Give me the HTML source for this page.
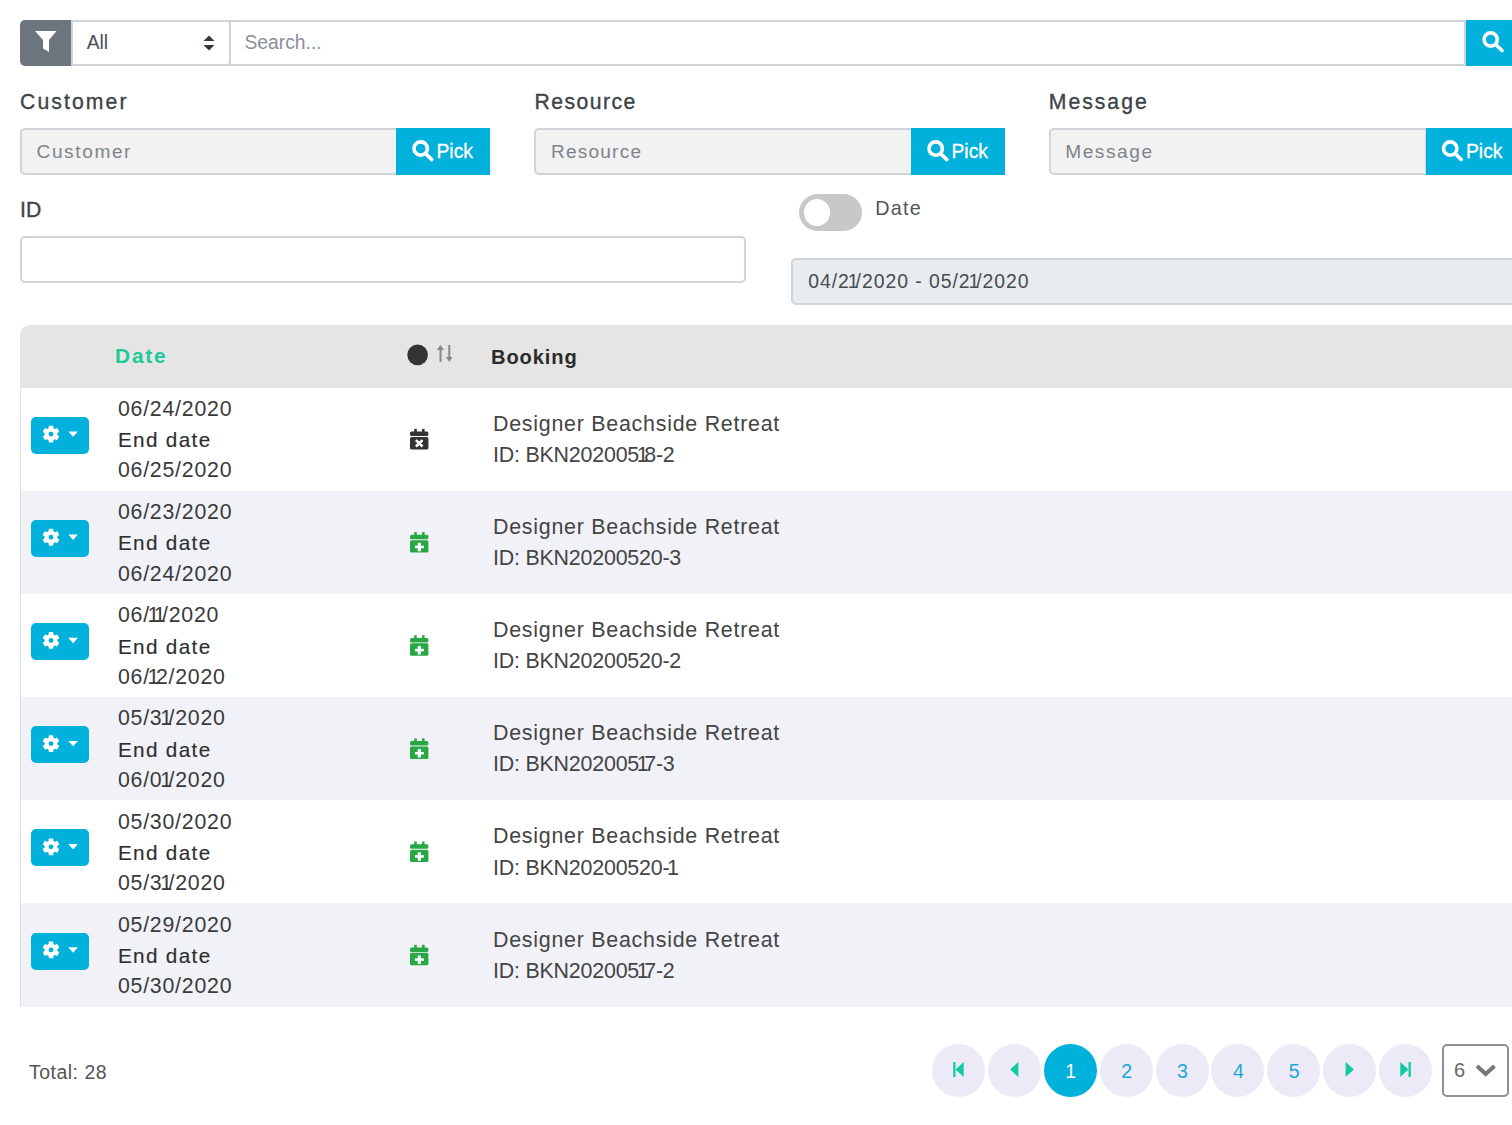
<!DOCTYPE html>
<html><head><meta charset="utf-8"><style>
html,body{margin:0;padding:0;background:#fff;}
body{width:1512px;height:1125px;overflow:hidden;position:relative;font-family:"Liberation Sans",sans-serif;}
.a{position:absolute;box-sizing:border-box;}
.t{position:absolute;line-height:1;white-space:nowrap;}
</style></head><body>
<div class="a" style="left:20.00px;top:20.00px;width:51.00px;height:46.00px;background:#6c757d;border-radius:5px 0 0 5px;"></div>
<svg class="a" style="left:0;top:0" width="100" height="80" viewBox="0 0 100 80"><path d="M35 31 L56.6 31 L49 40 L49 52 L43 48.5 L43 40 Z" fill="#fff"/></svg>
<div class="a" style="left:71.00px;top:20.00px;width:160.00px;height:46.00px;border:2px solid #ced4da;border-radius:0 4px 4px 0;background:#fff;"></div>
<div class="t" style="left:86.70px;top:33.00px;font-size:19.30px;color:#495057;font-weight:normal;letter-spacing:0.000px;">All</div>
<svg class="a" style="left:0;top:0" width="260" height="80" viewBox="0 0 260 80"><path d="M203.5 41 L209 35.5 L214.5 41 Z M203.5 45 L209 50.5 L214.5 45 Z" fill="#343a40"/></svg>
<div class="a" style="left:229.00px;top:20.00px;width:1237.00px;height:46.00px;border:2px solid #ced4da;background:#fff;"></div>
<div class="t" style="left:244.50px;top:33.00px;font-size:19.30px;color:#8a9097;font-weight:normal;letter-spacing:0.000px;">Search...</div>
<div class="a" style="left:1466.00px;top:20.00px;width:60.00px;height:46.00px;background:#00b1dc;"></div>
<svg class="a" style="left:0;top:0" width="1512" height="1125" viewBox="0 0 1512 1125"><circle cx="1490.7" cy="39.5" r="6.6000000000000005" fill="none" stroke="#fff" stroke-width="3.6"/><line x1="1495.9080000000001" y1="44.708" x2="1502" y2="50.5" stroke="#fff" stroke-width="3.6" stroke-linecap="round"/></svg>
<div class="t" style="left:20.00px;top:90.87px;font-size:21.20px;color:#3d4348;font-weight:normal;letter-spacing:2.100px;-webkit-text-stroke:0.35px #3d4348;">Customer</div>
<div class="a" style="left:20.00px;top:128.00px;width:378.50px;height:46.50px;border:2px solid #ced4da;border-radius:5px 0 0 5px;background:#f2f2f2;"></div>
<div class="t" style="left:36.50px;top:141.87px;font-size:19.10px;color:#7d848b;font-weight:normal;letter-spacing:1.600px;">Customer</div>
<div class="a" style="left:396.00px;top:128.00px;width:94.00px;height:46.50px;background:#00b1dc;"></div>
<svg class="a" style="left:0;top:0" width="1512" height="1125" viewBox="0 0 1512 1125"><circle cx="420.7" cy="148.6" r="6.7" fill="none" stroke="#fff" stroke-width="3.6"/><line x1="425.96999999999997" y1="153.87" x2="431.8" y2="159.6" stroke="#fff" stroke-width="3.6" stroke-linecap="round"/></svg>
<div class="t" style="left:436.50px;top:141.80px;font-size:19.30px;color:#fff;font-weight:normal;letter-spacing:0.000px;-webkit-text-stroke:0.3px #fff;">Pick</div>
<div class="t" style="left:534.40px;top:90.87px;font-size:21.20px;color:#3d4348;font-weight:normal;letter-spacing:1.460px;-webkit-text-stroke:0.35px #3d4348;">Resource</div>
<div class="a" style="left:534.40px;top:128.00px;width:378.50px;height:46.50px;border:2px solid #ced4da;border-radius:5px 0 0 5px;background:#f2f2f2;"></div>
<div class="t" style="left:550.90px;top:141.87px;font-size:19.10px;color:#7d848b;font-weight:normal;letter-spacing:1.200px;">Resource</div>
<div class="a" style="left:911.00px;top:128.00px;width:94.00px;height:46.50px;background:#00b1dc;"></div>
<svg class="a" style="left:0;top:0" width="1512" height="1125" viewBox="0 0 1512 1125"><circle cx="935.7" cy="148.6" r="6.7" fill="none" stroke="#fff" stroke-width="3.6"/><line x1="940.97" y1="153.87" x2="946.8" y2="159.6" stroke="#fff" stroke-width="3.6" stroke-linecap="round"/></svg>
<div class="t" style="left:951.50px;top:141.80px;font-size:19.30px;color:#fff;font-weight:normal;letter-spacing:0.000px;-webkit-text-stroke:0.3px #fff;">Pick</div>
<div class="t" style="left:1048.75px;top:90.87px;font-size:21.20px;color:#3d4348;font-weight:normal;letter-spacing:2.000px;-webkit-text-stroke:0.35px #3d4348;">Message</div>
<div class="a" style="left:1048.75px;top:128.00px;width:378.50px;height:46.50px;border:2px solid #ced4da;border-radius:5px 0 0 5px;background:#f2f2f2;"></div>
<div class="t" style="left:1065.25px;top:141.87px;font-size:19.10px;color:#7d848b;font-weight:normal;letter-spacing:1.550px;">Message</div>
<div class="a" style="left:1425.50px;top:128.00px;width:94.00px;height:46.50px;background:#00b1dc;"></div>
<svg class="a" style="left:0;top:0" width="1512" height="1125" viewBox="0 0 1512 1125"><circle cx="1450.2" cy="148.6" r="6.7" fill="none" stroke="#fff" stroke-width="3.6"/><line x1="1455.47" y1="153.87" x2="1461.3" y2="159.6" stroke="#fff" stroke-width="3.6" stroke-linecap="round"/></svg>
<div class="t" style="left:1466.00px;top:141.80px;font-size:19.30px;color:#fff;font-weight:normal;letter-spacing:0.000px;-webkit-text-stroke:0.3px #fff;">Pick</div>
<div class="t" style="left:20.00px;top:199.07px;font-size:21.20px;color:#3d4348;font-weight:normal;letter-spacing:0.000px;-webkit-text-stroke:0.35px #3d4348;">ID</div>
<div class="a" style="left:20.00px;top:236.40px;width:725.50px;height:46.50px;border:2px solid #ced4da;border-radius:5px;background:#fff;"></div>
<div class="a" style="left:799.00px;top:194.00px;width:63.00px;height:37.00px;background:#c8c8c8;border-radius:18.5px;"></div>
<div class="a" style="left:803.70px;top:198.70px;width:26.80px;height:27.50px;background:#fff;border-radius:50%;"></div>
<div class="t" style="left:875.30px;top:199.17px;font-size:19.80px;color:#555;font-weight:normal;letter-spacing:1.200px;">Date</div>
<div class="a" style="left:791.00px;top:258.30px;width:760.00px;height:46.50px;border:2px solid #ced4da;border-radius:5px;background:#e9ecef;"></div>
<div class="t" style="left:808.30px;top:272.32px;font-size:19.40px;color:#454c54;font-weight:normal;letter-spacing:0.950px;">04/2<span style="margin:0 -0.2em 0 -0.108em">1</span>/2020 - 05/2<span style="margin:0 -0.2em 0 -0.108em">1</span>/2020</div>
<div class="a" style="left:20.00px;top:325.00px;width:1540.00px;height:62.50px;background:#e5e5e5;border-radius:10px 0 0 0;"></div>
<div class="t" style="left:115.10px;top:345.61px;font-size:20.80px;color:#20c997;font-weight:bold;letter-spacing:1.800px;">Date</div>
<svg class="a" style="left:0;top:0" width="600" height="400" viewBox="0 0 600 400"><circle cx="417.6" cy="354.9" r="10.3" fill="#343434"/><path d="M440.5 345 L444 350 L441.5 350 L441.5 362 L439.5 362 L439.5 350 L437 350 Z" fill="#888"/><path d="M449.3 362 L452.6 357 L450.3 357 L450.3 345 L448.3 345 L448.3 357 L446 357 Z" fill="#888"/></svg>
<div class="t" style="left:491.00px;top:347.11px;font-size:20.10px;color:#2b2b2b;font-weight:bold;letter-spacing:0.900px;">Booking</div>
<div class="a" style="left:20.00px;top:387.50px;width:1.00px;height:619.02px;background:#dee2e6;"></div>
<div class="a" style="left:21.00px;top:387.50px;width:1500.00px;height:103.17px;background:#ffffff;"></div>
<div class="a" style="left:31.00px;top:416.70px;width:58.00px;height:37.00px;background:#00b1dc;border-radius:5px;"></div>
<svg class="a" style="left:0;top:0" width="100" height="1125" viewBox="0 0 100 1125"><g transform="translate(51.0,434.10)"><rect x="-2.3" y="-8.4" width="4.6" height="5" rx="0.8" fill="#fff" transform="rotate(0)"/><rect x="-2.3" y="-8.4" width="4.6" height="5" rx="0.8" fill="#fff" transform="rotate(60)"/><rect x="-2.3" y="-8.4" width="4.6" height="5" rx="0.8" fill="#fff" transform="rotate(120)"/><rect x="-2.3" y="-8.4" width="4.6" height="5" rx="0.8" fill="#fff" transform="rotate(180)"/><rect x="-2.3" y="-8.4" width="4.6" height="5" rx="0.8" fill="#fff" transform="rotate(240)"/><rect x="-2.3" y="-8.4" width="4.6" height="5" rx="0.8" fill="#fff" transform="rotate(300)"/><circle r="6.4" fill="#fff"/><circle r="2.4" fill="#00b1dc"/></g><path d="M68.3 431.40 L77.9 431.40 L73.1 436.80 Z" fill="#fff"/></svg>
<div class="t" style="left:117.90px;top:398.98px;font-size:21.30px;color:#3a3a3a;font-weight:normal;letter-spacing:0.780px;">06/24/2020</div>
<div class="t" style="left:117.90px;top:430.20px;font-size:20.70px;color:#2e2e2e;font-weight:normal;letter-spacing:1.350px;-webkit-text-stroke:0.15px #2e2e2e;">End date</div>
<div class="t" style="left:117.90px;top:460.48px;font-size:21.30px;color:#3a3a3a;font-weight:normal;letter-spacing:0.780px;">06/25/2020</div>
<svg class="a" style="left:0;top:0" width="500" height="1125" viewBox="0 0 500 1125"><rect x="414.2" y="428.90" width="2.6" height="4" fill="#343434"/><rect x="422" y="428.90" width="2.6" height="4" fill="#343434"/><rect x="410" y="431.60" width="18.4" height="4.5" rx="1.5" fill="#343434"/><rect x="410" y="437.00" width="18.4" height="12.4" rx="1.5" fill="#343434"/><path d="M415.9 440.10 L422.5 446.50 M422.5 440.10 L415.9 446.50" stroke="#fff" stroke-width="2.6"/></svg>
<div class="t" style="left:493.00px;top:413.80px;font-size:21.40px;color:#444;font-weight:normal;letter-spacing:0.750px;">Designer Beachside Retreat</div>
<div class="t" style="left:493.00px;top:444.90px;font-size:21.40px;color:#444;font-weight:normal;letter-spacing:-0.200px;">ID: BKN202005<span style="margin:0 -0.2em 0 -0.108em">1</span>8-2</div>
<div class="a" style="left:21.00px;top:490.67px;width:1500.00px;height:103.17px;background:#f1f2f7;"></div>
<div class="a" style="left:31.00px;top:519.87px;width:58.00px;height:37.00px;background:#00b1dc;border-radius:5px;"></div>
<svg class="a" style="left:0;top:0" width="100" height="1125" viewBox="0 0 100 1125"><g transform="translate(51.0,537.27)"><rect x="-2.3" y="-8.4" width="4.6" height="5" rx="0.8" fill="#fff" transform="rotate(0)"/><rect x="-2.3" y="-8.4" width="4.6" height="5" rx="0.8" fill="#fff" transform="rotate(60)"/><rect x="-2.3" y="-8.4" width="4.6" height="5" rx="0.8" fill="#fff" transform="rotate(120)"/><rect x="-2.3" y="-8.4" width="4.6" height="5" rx="0.8" fill="#fff" transform="rotate(180)"/><rect x="-2.3" y="-8.4" width="4.6" height="5" rx="0.8" fill="#fff" transform="rotate(240)"/><rect x="-2.3" y="-8.4" width="4.6" height="5" rx="0.8" fill="#fff" transform="rotate(300)"/><circle r="6.4" fill="#fff"/><circle r="2.4" fill="#00b1dc"/></g><path d="M68.3 534.57 L77.9 534.57 L73.1 539.97 Z" fill="#fff"/></svg>
<div class="t" style="left:117.90px;top:502.15px;font-size:21.30px;color:#3a3a3a;font-weight:normal;letter-spacing:0.780px;">06/23/2020</div>
<div class="t" style="left:117.90px;top:533.37px;font-size:20.70px;color:#2e2e2e;font-weight:normal;letter-spacing:1.350px;-webkit-text-stroke:0.15px #2e2e2e;">End date</div>
<div class="t" style="left:117.90px;top:563.65px;font-size:21.30px;color:#3a3a3a;font-weight:normal;letter-spacing:0.780px;">06/24/2020</div>
<svg class="a" style="left:0;top:0" width="500" height="1125" viewBox="0 0 500 1125"><rect x="414.2" y="532.07" width="2.6" height="4" fill="#28a745"/><rect x="422" y="532.07" width="2.6" height="4" fill="#28a745"/><rect x="410" y="534.77" width="18.4" height="4.5" rx="1.5" fill="#28a745"/><rect x="410" y="540.17" width="18.4" height="12.4" rx="1.5" fill="#28a745"/><rect x="414.9" y="545.67" width="8.9" height="2.5" fill="#fff"/><rect x="417.7" y="542.77" width="3.2" height="8.5" fill="#fff"/></svg>
<div class="t" style="left:493.00px;top:516.97px;font-size:21.40px;color:#444;font-weight:normal;letter-spacing:0.750px;">Designer Beachside Retreat</div>
<div class="t" style="left:493.00px;top:548.07px;font-size:21.40px;color:#444;font-weight:normal;letter-spacing:-0.200px;">ID: BKN20200520-3</div>
<div class="a" style="left:21.00px;top:593.84px;width:1500.00px;height:103.17px;background:#ffffff;"></div>
<div class="a" style="left:31.00px;top:623.04px;width:58.00px;height:37.00px;background:#00b1dc;border-radius:5px;"></div>
<svg class="a" style="left:0;top:0" width="100" height="1125" viewBox="0 0 100 1125"><g transform="translate(51.0,640.44)"><rect x="-2.3" y="-8.4" width="4.6" height="5" rx="0.8" fill="#fff" transform="rotate(0)"/><rect x="-2.3" y="-8.4" width="4.6" height="5" rx="0.8" fill="#fff" transform="rotate(60)"/><rect x="-2.3" y="-8.4" width="4.6" height="5" rx="0.8" fill="#fff" transform="rotate(120)"/><rect x="-2.3" y="-8.4" width="4.6" height="5" rx="0.8" fill="#fff" transform="rotate(180)"/><rect x="-2.3" y="-8.4" width="4.6" height="5" rx="0.8" fill="#fff" transform="rotate(240)"/><rect x="-2.3" y="-8.4" width="4.6" height="5" rx="0.8" fill="#fff" transform="rotate(300)"/><circle r="6.4" fill="#fff"/><circle r="2.4" fill="#00b1dc"/></g><path d="M68.3 637.74 L77.9 637.74 L73.1 643.14 Z" fill="#fff"/></svg>
<div class="t" style="left:117.90px;top:605.32px;font-size:21.30px;color:#3a3a3a;font-weight:normal;letter-spacing:0.780px;">06/<span style="margin:0 -0.2em 0 -0.108em">1</span><span style="margin:0 -0.2em 0 -0.108em">1</span>/2020</div>
<div class="t" style="left:117.90px;top:636.54px;font-size:20.70px;color:#2e2e2e;font-weight:normal;letter-spacing:1.350px;-webkit-text-stroke:0.15px #2e2e2e;">End date</div>
<div class="t" style="left:117.90px;top:666.82px;font-size:21.30px;color:#3a3a3a;font-weight:normal;letter-spacing:0.780px;">06/<span style="margin:0 -0.2em 0 -0.108em">1</span>2/2020</div>
<svg class="a" style="left:0;top:0" width="500" height="1125" viewBox="0 0 500 1125"><rect x="414.2" y="635.24" width="2.6" height="4" fill="#28a745"/><rect x="422" y="635.24" width="2.6" height="4" fill="#28a745"/><rect x="410" y="637.94" width="18.4" height="4.5" rx="1.5" fill="#28a745"/><rect x="410" y="643.34" width="18.4" height="12.4" rx="1.5" fill="#28a745"/><rect x="414.9" y="648.84" width="8.9" height="2.5" fill="#fff"/><rect x="417.7" y="645.94" width="3.2" height="8.5" fill="#fff"/></svg>
<div class="t" style="left:493.00px;top:620.14px;font-size:21.40px;color:#444;font-weight:normal;letter-spacing:0.750px;">Designer Beachside Retreat</div>
<div class="t" style="left:493.00px;top:651.24px;font-size:21.40px;color:#444;font-weight:normal;letter-spacing:-0.200px;">ID: BKN20200520-2</div>
<div class="a" style="left:21.00px;top:697.01px;width:1500.00px;height:103.17px;background:#f1f2f7;"></div>
<div class="a" style="left:31.00px;top:726.21px;width:58.00px;height:37.00px;background:#00b1dc;border-radius:5px;"></div>
<svg class="a" style="left:0;top:0" width="100" height="1125" viewBox="0 0 100 1125"><g transform="translate(51.0,743.61)"><rect x="-2.3" y="-8.4" width="4.6" height="5" rx="0.8" fill="#fff" transform="rotate(0)"/><rect x="-2.3" y="-8.4" width="4.6" height="5" rx="0.8" fill="#fff" transform="rotate(60)"/><rect x="-2.3" y="-8.4" width="4.6" height="5" rx="0.8" fill="#fff" transform="rotate(120)"/><rect x="-2.3" y="-8.4" width="4.6" height="5" rx="0.8" fill="#fff" transform="rotate(180)"/><rect x="-2.3" y="-8.4" width="4.6" height="5" rx="0.8" fill="#fff" transform="rotate(240)"/><rect x="-2.3" y="-8.4" width="4.6" height="5" rx="0.8" fill="#fff" transform="rotate(300)"/><circle r="6.4" fill="#fff"/><circle r="2.4" fill="#00b1dc"/></g><path d="M68.3 740.91 L77.9 740.91 L73.1 746.31 Z" fill="#fff"/></svg>
<div class="t" style="left:117.90px;top:708.49px;font-size:21.30px;color:#3a3a3a;font-weight:normal;letter-spacing:0.780px;">05/3<span style="margin:0 -0.2em 0 -0.108em">1</span>/2020</div>
<div class="t" style="left:117.90px;top:739.71px;font-size:20.70px;color:#2e2e2e;font-weight:normal;letter-spacing:1.350px;-webkit-text-stroke:0.15px #2e2e2e;">End date</div>
<div class="t" style="left:117.90px;top:769.99px;font-size:21.30px;color:#3a3a3a;font-weight:normal;letter-spacing:0.780px;">06/0<span style="margin:0 -0.2em 0 -0.108em">1</span>/2020</div>
<svg class="a" style="left:0;top:0" width="500" height="1125" viewBox="0 0 500 1125"><rect x="414.2" y="738.41" width="2.6" height="4" fill="#28a745"/><rect x="422" y="738.41" width="2.6" height="4" fill="#28a745"/><rect x="410" y="741.11" width="18.4" height="4.5" rx="1.5" fill="#28a745"/><rect x="410" y="746.51" width="18.4" height="12.4" rx="1.5" fill="#28a745"/><rect x="414.9" y="752.01" width="8.9" height="2.5" fill="#fff"/><rect x="417.7" y="749.11" width="3.2" height="8.5" fill="#fff"/></svg>
<div class="t" style="left:493.00px;top:723.31px;font-size:21.40px;color:#444;font-weight:normal;letter-spacing:0.750px;">Designer Beachside Retreat</div>
<div class="t" style="left:493.00px;top:754.41px;font-size:21.40px;color:#444;font-weight:normal;letter-spacing:-0.200px;">ID: BKN202005<span style="margin:0 -0.2em 0 -0.108em">1</span>7-3</div>
<div class="a" style="left:21.00px;top:800.18px;width:1500.00px;height:103.17px;background:#ffffff;"></div>
<div class="a" style="left:31.00px;top:829.38px;width:58.00px;height:37.00px;background:#00b1dc;border-radius:5px;"></div>
<svg class="a" style="left:0;top:0" width="100" height="1125" viewBox="0 0 100 1125"><g transform="translate(51.0,846.78)"><rect x="-2.3" y="-8.4" width="4.6" height="5" rx="0.8" fill="#fff" transform="rotate(0)"/><rect x="-2.3" y="-8.4" width="4.6" height="5" rx="0.8" fill="#fff" transform="rotate(60)"/><rect x="-2.3" y="-8.4" width="4.6" height="5" rx="0.8" fill="#fff" transform="rotate(120)"/><rect x="-2.3" y="-8.4" width="4.6" height="5" rx="0.8" fill="#fff" transform="rotate(180)"/><rect x="-2.3" y="-8.4" width="4.6" height="5" rx="0.8" fill="#fff" transform="rotate(240)"/><rect x="-2.3" y="-8.4" width="4.6" height="5" rx="0.8" fill="#fff" transform="rotate(300)"/><circle r="6.4" fill="#fff"/><circle r="2.4" fill="#00b1dc"/></g><path d="M68.3 844.08 L77.9 844.08 L73.1 849.48 Z" fill="#fff"/></svg>
<div class="t" style="left:117.90px;top:811.66px;font-size:21.30px;color:#3a3a3a;font-weight:normal;letter-spacing:0.780px;">05/30/2020</div>
<div class="t" style="left:117.90px;top:842.88px;font-size:20.70px;color:#2e2e2e;font-weight:normal;letter-spacing:1.350px;-webkit-text-stroke:0.15px #2e2e2e;">End date</div>
<div class="t" style="left:117.90px;top:873.16px;font-size:21.30px;color:#3a3a3a;font-weight:normal;letter-spacing:0.780px;">05/3<span style="margin:0 -0.2em 0 -0.108em">1</span>/2020</div>
<svg class="a" style="left:0;top:0" width="500" height="1125" viewBox="0 0 500 1125"><rect x="414.2" y="841.58" width="2.6" height="4" fill="#28a745"/><rect x="422" y="841.58" width="2.6" height="4" fill="#28a745"/><rect x="410" y="844.28" width="18.4" height="4.5" rx="1.5" fill="#28a745"/><rect x="410" y="849.68" width="18.4" height="12.4" rx="1.5" fill="#28a745"/><rect x="414.9" y="855.18" width="8.9" height="2.5" fill="#fff"/><rect x="417.7" y="852.28" width="3.2" height="8.5" fill="#fff"/></svg>
<div class="t" style="left:493.00px;top:826.48px;font-size:21.40px;color:#444;font-weight:normal;letter-spacing:0.750px;">Designer Beachside Retreat</div>
<div class="t" style="left:493.00px;top:857.58px;font-size:21.40px;color:#444;font-weight:normal;letter-spacing:-0.200px;">ID: BKN20200520-<span style="margin:0 -0.2em 0 -0.108em">1</span></div>
<div class="a" style="left:21.00px;top:903.35px;width:1500.00px;height:103.17px;background:#f1f2f7;"></div>
<div class="a" style="left:31.00px;top:932.55px;width:58.00px;height:37.00px;background:#00b1dc;border-radius:5px;"></div>
<svg class="a" style="left:0;top:0" width="100" height="1125" viewBox="0 0 100 1125"><g transform="translate(51.0,949.95)"><rect x="-2.3" y="-8.4" width="4.6" height="5" rx="0.8" fill="#fff" transform="rotate(0)"/><rect x="-2.3" y="-8.4" width="4.6" height="5" rx="0.8" fill="#fff" transform="rotate(60)"/><rect x="-2.3" y="-8.4" width="4.6" height="5" rx="0.8" fill="#fff" transform="rotate(120)"/><rect x="-2.3" y="-8.4" width="4.6" height="5" rx="0.8" fill="#fff" transform="rotate(180)"/><rect x="-2.3" y="-8.4" width="4.6" height="5" rx="0.8" fill="#fff" transform="rotate(240)"/><rect x="-2.3" y="-8.4" width="4.6" height="5" rx="0.8" fill="#fff" transform="rotate(300)"/><circle r="6.4" fill="#fff"/><circle r="2.4" fill="#00b1dc"/></g><path d="M68.3 947.25 L77.9 947.25 L73.1 952.65 Z" fill="#fff"/></svg>
<div class="t" style="left:117.90px;top:914.83px;font-size:21.30px;color:#3a3a3a;font-weight:normal;letter-spacing:0.780px;">05/29/2020</div>
<div class="t" style="left:117.90px;top:946.05px;font-size:20.70px;color:#2e2e2e;font-weight:normal;letter-spacing:1.350px;-webkit-text-stroke:0.15px #2e2e2e;">End date</div>
<div class="t" style="left:117.90px;top:976.33px;font-size:21.30px;color:#3a3a3a;font-weight:normal;letter-spacing:0.780px;">05/30/2020</div>
<svg class="a" style="left:0;top:0" width="500" height="1125" viewBox="0 0 500 1125"><rect x="414.2" y="944.75" width="2.6" height="4" fill="#28a745"/><rect x="422" y="944.75" width="2.6" height="4" fill="#28a745"/><rect x="410" y="947.45" width="18.4" height="4.5" rx="1.5" fill="#28a745"/><rect x="410" y="952.85" width="18.4" height="12.4" rx="1.5" fill="#28a745"/><rect x="414.9" y="958.35" width="8.9" height="2.5" fill="#fff"/><rect x="417.7" y="955.45" width="3.2" height="8.5" fill="#fff"/></svg>
<div class="t" style="left:493.00px;top:929.65px;font-size:21.40px;color:#444;font-weight:normal;letter-spacing:0.750px;">Designer Beachside Retreat</div>
<div class="t" style="left:493.00px;top:960.75px;font-size:21.40px;color:#444;font-weight:normal;letter-spacing:-0.200px;">ID: BKN202005<span style="margin:0 -0.2em 0 -0.108em">1</span>7-2</div>
<div class="t" style="left:28.90px;top:1063.12px;font-size:19.40px;color:#555;font-weight:normal;letter-spacing:0.550px;">Total: 28</div>
<div class="a" style="left:931.90px;top:1044.00px;width:53.00px;height:53.00px;border-radius:50%;background:#edeaf7;"></div>
<svg class="a" style="left:0;top:0" width="1512" height="1125" viewBox="0 0 1512 1125"><path d="M953.1999999999999 1062 h2.3 v15 h-2.3 Z M955.5 1069.5 L963.6999999999999 1062 L963.6999999999999 1077 Z" fill="#12c9a0"/></svg>
<div class="a" style="left:987.80px;top:1044.00px;width:53.00px;height:53.00px;border-radius:50%;background:#edeaf7;"></div>
<svg class="a" style="left:0;top:0" width="1512" height="1125" viewBox="0 0 1512 1125"><path d="M1010.0999999999999 1069.5 L1018.4 1062 L1018.4 1077 Z" fill="#12c9a0"/></svg>
<div class="a" style="left:1043.70px;top:1044.00px;width:53.00px;height:53.00px;border-radius:50%;background:#00b1dc;"></div>
<div class="t" style="left:1043.70px;width:53px;text-align:center;top:1061.93px;padding-left:1px;box-sizing:border-box;font-size:19.5px;color:#fff">1</div>
<div class="a" style="left:1099.60px;top:1044.00px;width:53.00px;height:53.00px;border-radius:50%;background:#edeaf7;"></div>
<div class="t" style="left:1099.60px;width:53px;text-align:center;top:1061.93px;padding-left:1px;box-sizing:border-box;font-size:19.5px;color:#1aa6d6">2</div>
<div class="a" style="left:1155.50px;top:1044.00px;width:53.00px;height:53.00px;border-radius:50%;background:#edeaf7;"></div>
<div class="t" style="left:1155.50px;width:53px;text-align:center;top:1061.93px;padding-left:1px;box-sizing:border-box;font-size:19.5px;color:#1aa6d6">3</div>
<div class="a" style="left:1211.40px;top:1044.00px;width:53.00px;height:53.00px;border-radius:50%;background:#edeaf7;"></div>
<div class="t" style="left:1211.40px;width:53px;text-align:center;top:1061.93px;padding-left:1px;box-sizing:border-box;font-size:19.5px;color:#1aa6d6">4</div>
<div class="a" style="left:1267.30px;top:1044.00px;width:53.00px;height:53.00px;border-radius:50%;background:#edeaf7;"></div>
<div class="t" style="left:1267.30px;width:53px;text-align:center;top:1061.93px;padding-left:1px;box-sizing:border-box;font-size:19.5px;color:#1aa6d6">5</div>
<div class="a" style="left:1323.20px;top:1044.00px;width:53.00px;height:53.00px;border-radius:50%;background:#edeaf7;"></div>
<svg class="a" style="left:0;top:0" width="1512" height="1125" viewBox="0 0 1512 1125"><path d="M1353.9 1069.5 L1345.6000000000001 1062 L1345.6000000000001 1077 Z" fill="#12c9a0"/></svg>
<div class="a" style="left:1379.10px;top:1044.00px;width:53.00px;height:53.00px;border-radius:50%;background:#edeaf7;"></div>
<svg class="a" style="left:0;top:0" width="1512" height="1125" viewBox="0 0 1512 1125"><path d="M1410.8 1062 h-2.3 v15 h2.3 Z M1408.5 1069.5 L1400.3 1062 L1400.3 1077 Z" fill="#12c9a0"/></svg>
<div class="a" style="left:1442.00px;top:1044.00px;width:66.50px;height:53.00px;border:2px solid #8f8f8f;border-radius:5px;background:#fff;"></div>
<div class="t" style="left:1454.00px;top:1060.30px;font-size:20.00px;color:#666;font-weight:normal;letter-spacing:0.000px;">6</div>
<svg class="a" style="left:0;top:0" width="1512" height="1125" viewBox="0 0 1512 1125"><path d="M1477 1066 L1485.7 1074 L1494.5 1066" fill="none" stroke="#777" stroke-width="4"/></svg>
</body></html>
